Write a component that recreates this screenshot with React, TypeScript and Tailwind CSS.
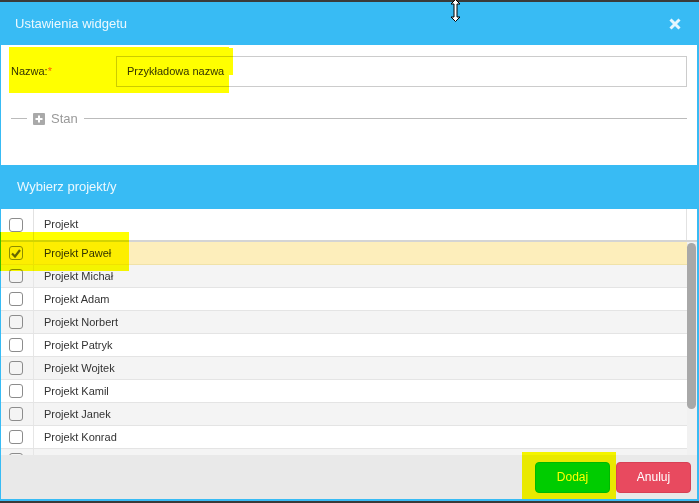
const projects = [
  "Projekt Paweł",
  "Projekt Michał",
  "Projekt Adam",
  "Projekt Norbert",
  "Projekt Patryk",
  "Projekt Wojtek",
  "Projekt Kamil",
  "Projekt Janek",
  "Projekt Konrad",
  "",
]

function Checkbox({ checked = false }: { checked?: boolean }) {
  return (
    <span className="flex h-[14px] w-[14px] items-center justify-center rounded-[3px] border border-[#8c8c8c] bg-white/0">
      {checked && (
        <svg width="10" height="9" viewBox="0 0 10 9">
          <path d="M1 4.5 L4 7.5 L9 1" fill="none" stroke="#666" strokeWidth="2.2" />
        </svg>
      )}
    </span>
  )
}

export default function App() {
  return (
    <div className="relative flex h-[503px] w-[699px] flex-col border-y-2 border-[#3a3a3a] bg-[#38bbf4] font-['Liberation_Sans',Arial,sans-serif]">
      {/* Header */}
      <div className="flex h-[43px] items-center justify-between pl-[15px] pr-[18px]">
        <span className="text-[13px] text-white/90">Ustawienia widgetu</span>
        <svg width="12" height="12" viewBox="0 0 12 12">
          <path d="M1.5 1.5 L10.5 10.5 M10.5 1.5 L1.5 10.5" stroke="#e4f6fe" strokeWidth="3" />
        </svg>
      </div>

      {/* Form */}
      <div className="ml-[1px] mr-[2px] flex h-[120px] flex-col bg-white pl-[10px] pr-[10px] pt-[11px]">
        <div className="flex items-center">
          <label className="w-[105px] text-[11px] text-[#333]">
            Nazwa:<span className="text-[#ff5a00]">*</span>
          </label>
          <div className="flex h-[31px] flex-1 items-center border border-[#cccccc] pl-[10px] text-[11px] text-[#333]">
            Przykładowa nazwa
          </div>
        </div>
        <div className="mt-[22px] flex items-center">
          <div className="h-px w-[16px] bg-[#bbbbbb]" />
          <svg className="ml-[6px]" width="12" height="12" viewBox="0 0 12 12">
            <rect width="12" height="12" rx="1" fill="#a9a9a9" />
            <path d="M6 2.5 V9.5 M2.5 6 H9.5" stroke="#fff" strokeWidth="2" />
          </svg>
          <span className="ml-[6px] text-[13px] text-[#999]">Stan</span>
          <div className="ml-[6px] h-px flex-1 bg-[#bbbbbb]" />
        </div>
      </div>

      {/* Section title */}
      <div className="flex h-[44px] items-center pl-[17px] text-[13px] text-white/90">Wybierz projekt/y</div>

      {/* Table header */}
      <div className="ml-[1px] mr-[2px] flex h-[33px] border-b-2 border-[#d4d4d4] bg-white">
        <div className="flex w-[33px] items-center border-r border-[#e2e2e2] pl-[8px]">
          <Checkbox />
        </div>
        <div className="flex flex-1 items-center border-r border-[#e2e2e2] pl-[10px] text-[11px] text-[#333]">Projekt</div>
        <div className="w-[10px]" />
      </div>

      {/* Rows */}
      <div className="ml-[1px] mr-[2px] flex h-[213px] overflow-hidden bg-white">
        <div className="flex flex-1 flex-col">
          {projects.map((name, i) => (
            <div
              key={i}
              className={
                i === 0
                  ? "flex h-[23px] shrink-0 border-b border-[#f0e2a8] bg-[#fdeebb]"
                  : i % 2 === 1
                    ? "flex h-[23px] shrink-0 border-b border-[#e4e4e4] bg-[#f4f4f4]"
                    : "flex h-[23px] shrink-0 border-b border-[#e4e4e4] bg-white"
              }
            >
              <div className="flex w-[33px] items-center border-r border-[#e6e6e6] pl-[8px]">
                <Checkbox checked={i === 0} />
              </div>
              <div className="flex flex-1 items-center pl-[10px] text-[11px] text-[#333]">{name}</div>
            </div>
          ))}
        </div>
        <div className="flex w-[10px] flex-col bg-[#f1f1f1] pt-[1px]">
          <div className="h-[166px] w-[9px] rounded-full bg-[#a8a8a8]" />
        </div>
      </div>

      {/* Footer */}
      <div className="ml-[1px] mr-[2px] flex h-[44px] items-center justify-end gap-[6px] bg-[#e9e9e9] pr-[6px]">
        <button className="h-[31px] w-[75px] rounded-[4px] border border-[#00b800] bg-[#00cc00] text-[12px] text-white">
          Dodaj
        </button>
        <button className="h-[31px] w-[75px] rounded-[4px] border border-[#d84055] bg-[#e84a5f] text-[12px] text-white">
          Anuluj
        </button>
      </div>

      {/* Yellow annotation highlights */}
      <div className="pointer-events-none absolute left-[9px] top-[45px] h-[46px] w-[220px] bg-[#ffff00] mix-blend-multiply" />
      <div className="pointer-events-none absolute left-[229px] top-[46px] h-[27px] w-[4px] bg-[#ffff00] mix-blend-multiply" />
      <div className="pointer-events-none absolute left-0 top-[230px] h-[39px] w-[129px] bg-[#ffff00] mix-blend-multiply" />
      <div className="pointer-events-none absolute left-[522px] top-[450px] h-[47px] w-[94px] bg-[#ffff00] mix-blend-multiply" />

      {/* Mouse cursor */}
      <svg className="pointer-events-none absolute left-[450px] top-[-3px]" width="11" height="23" viewBox="0 0 11 23">
        <path d="M5.5 0.5 L10 5 L7 5 L7 18 L10 18 L5.5 22.5 L1 18 L4 18 L4 5 L1 5 Z" fill="#fff" stroke="#000" strokeWidth="1" />
      </svg>
    </div>
  )
}
